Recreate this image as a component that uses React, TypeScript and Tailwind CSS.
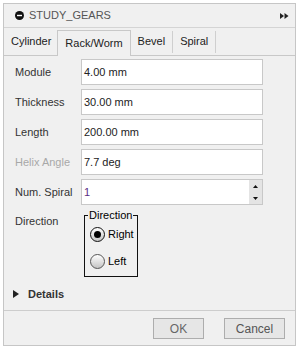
import React from "react";

const font = { fontFamily: '"Liberation Sans", Arial, sans-serif' };

function Field({ label, value, dim, spin, valueColor }: { label: string; value: string; dim?: boolean; spin?: boolean; valueColor?: string }) {
  return (
    <div className="flex items-center h-[26px]">
      <div className={`w-[66px] pl-[11px] box-content text-[11px] ${dim ? "text-[#a8a8a8]" : "text-[#333]"}`}>{label}</div>
      <div className="w-[182px] h-[26px] border border-[#c8c8c8] bg-white flex items-center">
        <div className={`flex-1 pl-[2px] text-[11px] ${valueColor ?? "text-[#222]"}`}>{value}</div>
        {spin && (
          <div className="w-[13px] h-[24px] flex flex-col bg-[#e4e4e4] mr-[0px]">
            <div className="flex-1 flex items-center justify-center">
              <svg width="5" height="3" viewBox="0 0 5 3"><polygon points="2.5,0 5,3 0,3" fill="#111" /></svg>
            </div>
            <div className="flex-1 flex items-center justify-center">
              <svg width="5" height="3" viewBox="0 0 5 3"><polygon points="0,0 5,0 2.5,3" fill="#111" /></svg>
            </div>
          </div>
        )}
      </div>
    </div>
  );
}

function Radio({ checked, label }: { checked?: boolean; label: string }) {
  return (
    <div className="flex items-center h-[20px] pl-[5px]">
      <div className={`w-[15px] h-[15px] rounded-full border ${checked ? "border-[#111]" : "border-[#555]"} bg-gradient-to-b from-[#ffffff] to-[#c4c4c4] flex items-center justify-center`}>
        {checked && <div className="w-[7px] h-[7px] rounded-full bg-[#000]" />}
      </div>
      <span className="ml-[3px] text-[11px] text-[#000]">{label}</span>
    </div>
  );
}

export default function App() {
  return (
    <div className="w-[300px] h-[350px] bg-white pt-[3px] pl-[3px]" style={font}>
      <div className="w-[293px] h-[343px] border border-[#c6c6c6] bg-[#f0f0f0] flex flex-col">
        {/* title */}
        <div className="h-[24px] border-b border-[#d4d4d4] flex items-center pl-[11px] pr-[6px]">
          <svg width="9" height="9" viewBox="0 0 9 9">
            <circle cx="4.5" cy="4.5" r="4.5" fill="#111" />
            <rect x="2" y="3.8" width="5" height="1.4" fill="#fff" />
          </svg>
          <span className="ml-[5px] text-[11px] text-[#555] tracking-[0px]">STUDY_GEARS</span>
          <div className="flex-1" />
          <svg width="9" height="6" viewBox="0 0 9 6">
            <polygon points="0,0 4,3 0,6" fill="#222" />
            <polygon points="4.5,0 8.5,3 4.5,6" fill="#222" />
          </svg>
        </div>
        {/* tabs */}
        <div className="h-[28px] border-b border-[#c8c8c8] flex items-end text-[11px] text-[#222]">
          <div className="h-full flex items-center pl-[7px] pr-[6px]">Cylinder</div>
          <div className="h-[26px] -mb-px border border-b-0 border-[#c8c8c8] bg-[#f0f0f0] flex items-center px-[7px] pb-[1px]">Rack/Worm</div>
          <div className="h-full flex items-center">
            <span className="px-[7px]">Bevel</span>
            <span className="w-px h-[22px] bg-[#cfcfcf]" />
            <span className="px-[7px]">Spiral</span>
            <span className="w-px h-[22px] bg-[#cfcfcf]" />
          </div>
        </div>
        {/* content */}
        <div className="flex-1 flex flex-col pt-[3px]">
          <div className="flex flex-col gap-[4px]">
            <Field label="Module" value="4.00 mm" />
            <Field label="Thickness" value="30.00 mm" />
            <Field label="Length" value="200.00 mm" />
            <Field label="Helix Angle" value="7.7 deg" dim />
            <Field label="Num. Spiral" value="1" spin valueColor="text-[#5b2c83]" />
          </div>
          <div className="flex items-start mt-[4px]">
            <div className="w-[69px] pl-[11px] box-content pt-[6px] text-[11px] leading-[13px] text-[#333]">Direction</div>
            <fieldset className="w-[54px] border border-[#111] pb-[5px]">
              <legend className="ml-[3px] px-[1px] text-[11px] leading-[13px] text-[#000]">Direction</legend>
              <div className="flex flex-col gap-[7px] pt-[2px]">
                <Radio checked label="Right" />
                <Radio label="Left" />
              </div>
            </fieldset>
          </div>
          <div className="flex items-center h-[14px] mt-[10px] pl-[9px]">
            <svg width="6" height="8" viewBox="0 0 6 8"><polygon points="0,0 6,4 0,8" fill="#222" /></svg>
            <span className="ml-[9px] text-[11px] font-bold text-[#333]">Details</span>
          </div>
        </div>
        {/* footer */}
        <div className="h-[35px] border-t border-[#cdcdcd] flex justify-end items-start pt-[7px] pr-[10px] gap-[20px]">
          <button className="w-[51px] h-[21px] border border-[#adadad] bg-[#e6e6e6] text-[12px] text-[#666]">OK</button>
          <button className="w-[61px] h-[21px] border border-[#adadad] bg-[#e6e6e6] text-[12px] text-[#555]">Cancel</button>
        </div>
      </div>
    </div>
  );
}
